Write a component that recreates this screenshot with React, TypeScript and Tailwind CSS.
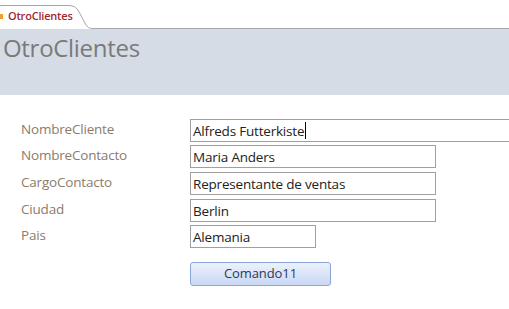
import React from "react";

const rows: { label: string; value: string; w: string; mt: string; focus?: boolean }[] = [
  { label: "NombreCliente", value: "Alfreds Futterkiste", w: "w-[330px]", mt: "mt-0", focus: true },
  { label: "NombreContacto", value: "Maria Anders", w: "w-[246px]", mt: "mt-[3px]" },
  { label: "CargoContacto", value: "Representante de ventas", w: "w-[246px]", mt: "mt-[4px]" },
  { label: "Ciudad", value: "Berlin", w: "w-[246px]", mt: "mt-[4px]" },
  { label: "Pais", value: "Alemania", w: "w-[126px]", mt: "mt-[3px]" },
];

export default function App() {
  return (
    <div
      className="w-[509px] h-[309px] bg-white overflow-hidden relative"
      style={{ fontFamily: '"Open Sans", "Noto Sans", sans-serif' }}
    >
      {/* tab bar */}
      <div className="h-[29px] relative">
        <svg className="absolute left-0 top-0" width="509" height="29" viewBox="0 0 509 29">
          <path
            d="M0 5.5 H70 Q75 5.5 78 10 L86 25 Q88 28.5 92 28.5 H509"
            fill="none"
            stroke="#a8a8a8"
            strokeWidth="1"
          />
        </svg>
        <div className="absolute left-0 top-[14px] w-[3px] h-[5px] bg-[#f0a030]" />
        <div className="absolute left-[8px] top-[9px] text-[11px] leading-[14px] font-semibold text-[#a4262c] tracking-[-0.2px]">
          OtroClientes
        </div>
      </div>
      {/* header */}
      <div className="h-[66px] bg-[#d5dce6] pl-[3px] pt-[4px]">
        <div className="text-[24px] leading-[30px] text-[#7a7a7a] tracking-[-0.3px]">OtroClientes</div>
      </div>
      {/* form */}
      <div className="pt-[24px] pl-[21px]">
        {rows.map((r) => (
          <div key={r.label} className={`flex items-center ${r.mt}`}>
            <div className="w-[169px] shrink-0 text-[13.5px] leading-[16px] text-[#8c7b6b] -mt-[3px] tracking-[-0.2px]">
              {r.label}
            </div>
            <div
              className={`${r.w} h-[23px] border border-[#a0a0a0] pl-[2px] flex items-center text-[13.5px] leading-[16px] text-[#222] tracking-[-0.2px] shrink-0`}
            >
              <span>{r.value}</span>
              {r.focus && <span className="inline-block w-[1px] h-[17px] bg-black ml-[1px]" />}
            </div>
          </div>
        ))}
        <div className="pl-[169px] mt-[14px]">
          <button className="w-[141px] h-[24px] rounded-[3px] border border-[#8aa6d6] bg-gradient-to-b from-[#ecf1fc] to-[#c9d8f4] text-[13px] text-[#2a3a55] tracking-[-0.1px] flex items-center justify-center">
            Comando11
          </button>
        </div>
      </div>
    </div>
  );
}
